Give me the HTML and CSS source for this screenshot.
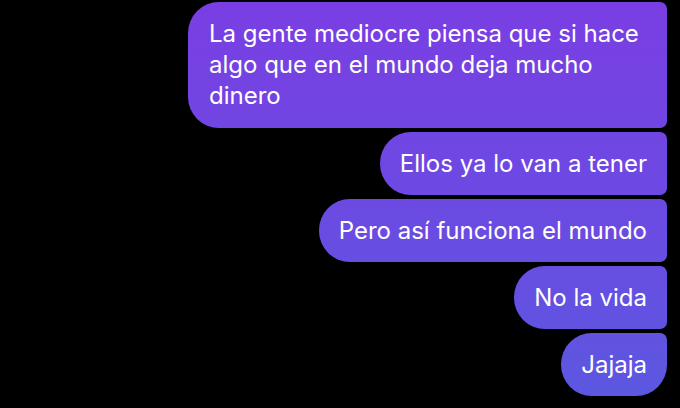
FILE: index.html
```html
<!DOCTYPE html>
<html lang="es">
<head>
  <meta charset="UTF-8" />
  <meta name="viewport" content="width=device-width, initial-scale=1.0" />
  <title>Chat</title>
  <link rel="stylesheet" href="styles.css">
</head>
<body>
  <div class="thread">
    <div class="bubble first">La gente mediocre piensa que si hace algo que en el mundo deja mucho dinero</div>
    <div class="bubble">Ellos ya lo van a tener</div>
    <div class="bubble">Pero así funciona el mundo</div>
    <div class="bubble">No la vida</div>
    <div class="bubble last">Jajaja</div>
  </div>
</body>
</html>
```

FILE: styles.css
```css
body {
  background-color: #000;
  margin: 0;
  font-family: Inter, 'Liberation Sans', sans-serif;
  color: #fff;
}

.thread {
  display: flex;
  flex-direction: column;
  align-items: flex-end;
  gap: 4px;
  padding: 2px 13px 0 0;
}

.bubble {
  max-width: 438px;
  padding: 16px 20px;
  font-size: 24px;
  line-height: 31px;
  border-radius: 31px 7px 7px 31px;
  background: linear-gradient(180deg, #7a3ee3 0%, #6c4ae2 50%, #5b58e0 100%);
  background-attachment: fixed;
}

.first {
  width: 438px;
  padding-left: 21px;
  padding-bottom: 17px;
}

.last {
  border-radius: 31px 7px 31px 31px;
}
```
